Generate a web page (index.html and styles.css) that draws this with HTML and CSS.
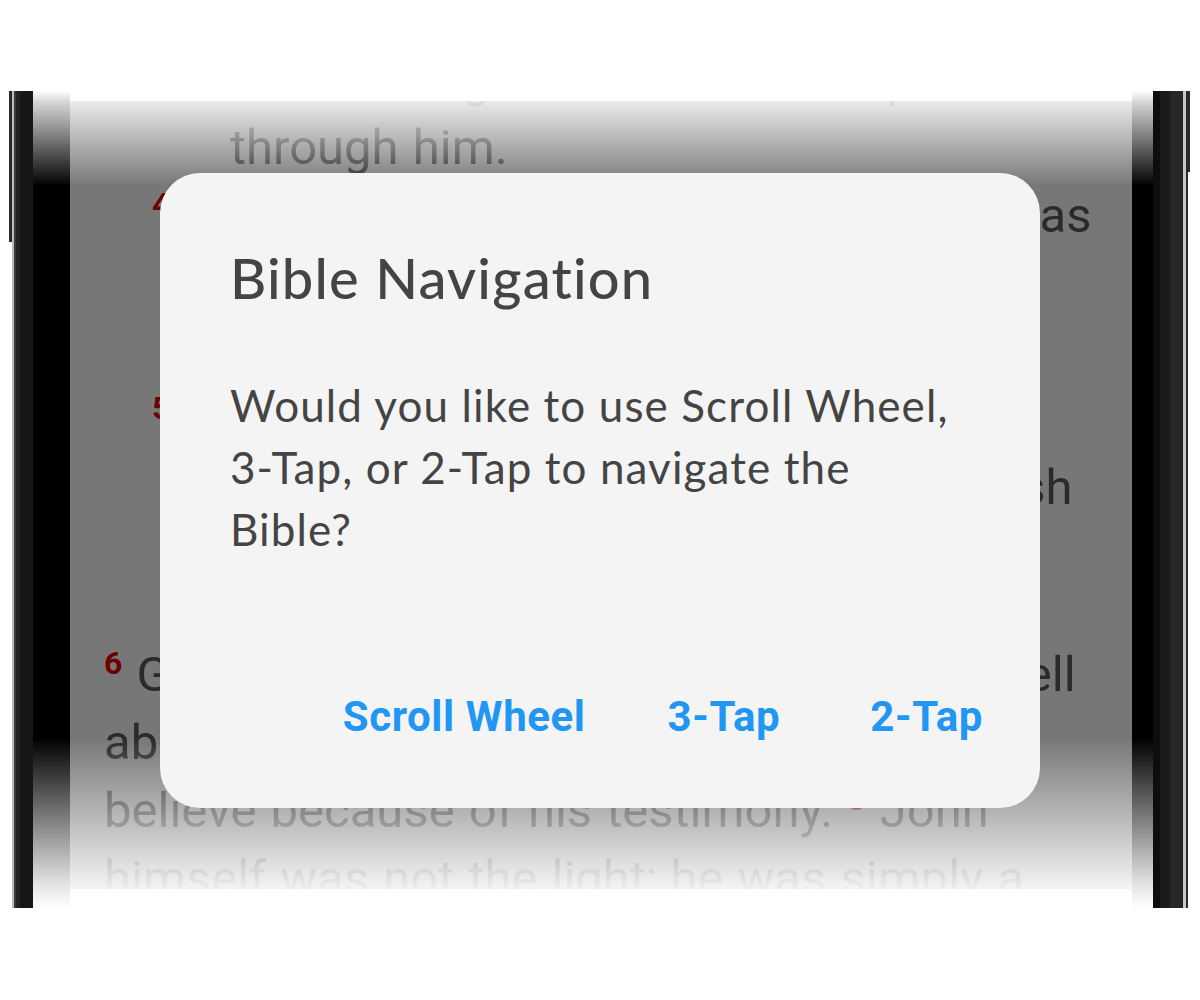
FILE: index.html
```html
<!DOCTYPE html>
<html lang="en">
<head>
    <meta charset="UTF-8">
    <meta name="viewport" content="width=device-width, initial-scale=1.0">
    <title>Bible Navigation</title>
    <link rel="stylesheet" href="styles.css">
</head>
<body>
    <div class="phone">
        <div class="shell shell-left"></div>

        <div class="device">
            <div class="bezel bezel-left"></div>

            <div class="screen">
                <div class="reading">
                    <div class="line cont">and nothing was created except</div>
                    <div class="line cont">through him.</div>
                    <div class="line first"><sup class="verse">4</sup> The Word gave life to everything that was</div>
                    <div class="line cont">created,</div>
                    <div class="line cont">and his life brought light to everyone.</div>
                    <div class="line first"><sup class="verse">5</sup> The light shines in the darkness,</div>
                    <div class="line cont">and the darkness can never extinguish</div>
                    <div class="line cont">it.</div>

                    <p class="prose">
                        <span class="line"><sup class="verse">6</sup> God sent a man, John the Baptist, <sup class="verse verse-gap">7</sup> to tell</span>
                        <span class="line">about the light so that everyone might</span>
                        <span class="line">believe because of his testimony. <sup class="verse">8</sup> John</span>
                        <span class="line">himself was not the light; he was simply a</span>
                    </p>
                </div>

                <div class="dialog">
                    <h2 class="dialog-title">Bible Navigation</h2>
                    <p class="dialog-text">Would you like to use Scroll Wheel, 3-Tap, or 2-Tap to navigate the Bible?</p>
                    <div class="dialog-actions">
                        <button class="action">Scroll Wheel</button>
                        <button class="action">3-Tap</button>
                        <button class="action">2-Tap</button>
                    </div>
                </div>
            </div>

            <div class="bezel bezel-right"></div>

            <div class="fade fade-top"></div>
            <div class="fade fade-bottom"></div>
        </div>

        <div class="shell shell-right"></div>
    </div>
</body>
</html>
```

FILE: styles.css
```css
/* General */
body {
    margin: 0;
    background: #fff;
    font-family: Roboto, "Liberation Sans", sans-serif;
}

/* Phone frame */
.phone {
    display: flex;
    height: 817px;
    margin: 91px 0 0 9px;
}

.shell {
    position: relative;
}

.shell-left {
    width: 24px;
    background: linear-gradient(to right,
        transparent 0, transparent 3px,
        #bdbdbd 3px, #bdbdbd 5px,
        #3a3a3a 5px, #3a3a3a 7px,
        #222 7px, #222 11px,
        #161616 11px);
}

.shell-left::before {
    content: "";
    position: absolute;
    left: 0;
    top: 0;
    width: 3px;
    height: 151px;
    background: #2a2a2a;
}

.shell-right {
    width: 37px;
    background: linear-gradient(to right,
        #0d0d0d 0, #0d0d0d 7px,
        #1b1b1b 7px, #1b1b1b 17px,
        #262626 17px, #262626 30px,
        #c8c8c8 30px, #c8c8c8 33px,
        #2a2a2a 33px, #2a2a2a 35px,
        transparent 35px);
}

.shell-right::before {
    content: "";
    position: absolute;
    right: 0;
    top: 0;
    width: 2px;
    height: 81px;
    background: #2a2a2a;
}

.device {
    position: relative;
    display: flex;
}

.bezel {
    background: #000;
}

.bezel-left {
    width: 37px;
}

.bezel-right {
    width: 21px;
}

/* Screen */
.screen {
    position: relative;
    width: 1062px;
    height: 788px;
    margin-top: 10px;
    overflow: hidden;
    background: #777;
    color: #2a2a2a;
}

.reading {
    margin-top: -55px;
    font-size: 49px;
    line-height: 68px;
    word-spacing: 2px;
    white-space: nowrap;
}

.line {
    display: block;
}

.first {
    padding-left: 82px;
}

.cont {
    padding-left: 160px;
}

.prose {
    margin: 51px 0 0;
    padding-left: 34px;
}

.verse {
    font-size: 32px;
    font-weight: 700;
    color: #6d0000;
    vertical-align: 17px;
    line-height: 0;
}

.verse-gap {
    margin: 0 13px;
}

/* Fades at top and bottom */
.fade {
    position: absolute;
    left: 0;
    right: 0;
    z-index: 1;
    pointer-events: none;
}

.fade-top {
    top: 0;
    height: 95px;
    background: linear-gradient(to bottom, #fff 0, rgba(255, 255, 255, 0.85) 10px, rgba(255, 255, 255, 0) 95px);
}

.fade-bottom {
    bottom: 0;
    height: 170px;
    background: linear-gradient(to bottom, rgba(255, 255, 255, 0), rgba(255, 255, 255, 0.9) 148px, #fff);
}

/* Dialog */
.dialog {
    position: absolute;
    left: 90px;
    top: 72px;
    z-index: 2;
    box-sizing: border-box;
    display: flex;
    flex-direction: column;
    width: 880px;
    height: 635px;
    padding: 0 60px 66px 70px;
    background: #f4f4f4;
    border-radius: 40px;
    color: #444;
    font-family: Lato, "Noto Sans", sans-serif;
    font-variant-ligatures: none;
}

.dialog-title {
    margin: 70px 0 0;
    font-size: 56px;
    font-weight: 500;
    line-height: 70px;
    letter-spacing: 1.2px;
}

.dialog-text {
    margin: 61px 0 0;
    font-size: 44px;
    line-height: 62px;
    letter-spacing: 1.1px;
}

.dialog-actions {
    display: flex;
    justify-content: flex-end;
    gap: 82px;
    margin: auto -3px 0 0;
}

.action {
    padding: 0;
    border: 0;
    background: none;
    color: #2196f3;
    font-family: Roboto, "Liberation Sans", sans-serif;
    font-size: 42px;
    font-weight: 700;
    line-height: 50px;
    letter-spacing: 0.6px;
    cursor: pointer;
}

.action:last-child {
    margin-left: 8px;
}
```
